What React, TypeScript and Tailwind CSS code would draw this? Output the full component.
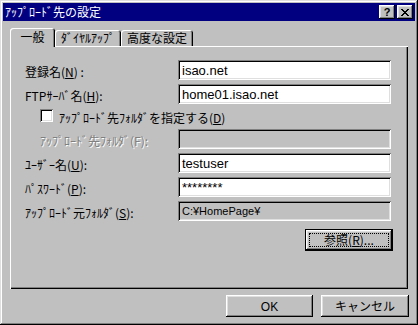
const jp = "font-['Noto_Sans_CJK_JP',sans-serif]";
const raised =
  "shadow-[inset_-1px_-1px_#000,inset_1px_1px_#fff,inset_-2px_-2px_#808080,inset_2px_2px_#dfdfdf]";
const sunken =
  "shadow-[inset_1px_1px_#808080,inset_-1px_-1px_#fff,inset_2px_2px_#000,inset_-2px_-2px_#dfdfdf]";

function Label({ children, disabled }: { children: React.ReactNode; disabled?: boolean }) {
  return (
    <span
      className={`text-[12px] leading-none whitespace-nowrap ${jp} ${
        disabled ? "text-[#808080] [text-shadow:1px_1px_0_#fff]" : "text-black"
      }`}
    >
      {children}
    </span>
  );
}

function Field({
  label,
  value,
  gray,
  small,
  indent,
  disabled,
}: {
  label: React.ReactNode;
  value?: string;
  gray?: boolean;
  small?: boolean;
  indent?: boolean;
  disabled?: boolean;
}) {
  return (
    <div className="flex h-[20px] items-center">
      <div className={indent ? "ml-[15px] w-[138px]" : "w-[153px]"}>
        <Label disabled={disabled}>{label}</Label>
      </div>
      <div
        className={`flex h-[20px] w-[213px] items-center pl-[4px] ${sunken} ${
          gray ? "bg-[#c0c0c0]" : "bg-white"
        }`}
      >
        <span
          className={`font-['Liberation_Sans',sans-serif] leading-none text-black ${
            small ? "text-[11px]" : "text-[13px]"
          }`}
        >
          {value}
        </span>
      </div>
    </div>
  );
}

function Tab({ label, selected, w }: { label: string; selected?: boolean; w: string }) {
  return (
    <div
      className={`flex items-center justify-center rounded-t-[3px] bg-[#c0c0c0] shadow-[inset_1px_1px_#fff,inset_-1px_0_#000,inset_-2px_0_#808080] ${w} ${
        selected ? "relative z-10 -mb-px h-[19px] pb-[1px]" : "h-[16px]"
      }`}
    >
      <span className={`text-[12px] leading-none text-black ${jp}`}>{label}</span>
    </div>
  );
}

function Button({ children, def }: { children: React.ReactNode; def?: boolean }) {
  if (def) {
    return (
      <div className="h-[22px] w-[88px] border border-black bg-[#c0c0c0]">
        <div className={`flex h-full w-full items-center justify-center p-[3px] ${raised}`}>
          <div className="flex h-full w-full items-center justify-center border border-dotted border-black">
            <span className={`text-[12px] leading-none ${jp}`}>{children}</span>
          </div>
        </div>
      </div>
    );
  }
  return (
    <div className={`flex h-[22px] items-center justify-center bg-[#c0c0c0] ${raised}`}>
      <span className={`text-[12px] leading-none ${jp}`}>{children}</span>
    </div>
  );
}

export default function App() {
  return (
    <div
      className={`flex h-[325px] w-[418px] flex-col bg-[#c0c0c0] p-[3px] shadow-[inset_-1px_-1px_#000,inset_1px_1px_#dfdfdf,inset_-2px_-2px_#808080,inset_2px_2px_#fff] ${jp}`}
    >
      {/* title bar */}
      <div className="flex h-[18px] items-center bg-[#000080] pl-[2px] pr-[2px]">
        <span className="text-[12px] leading-none text-white">ｱｯﾌﾟﾛｰﾄﾞ先の設定</span>
        <div className="ml-auto flex gap-[2px]">
          <div className={`flex h-[14px] w-[16px] items-center justify-center bg-[#c0c0c0] ${raised}`}>
            <span className="font-['Liberation_Sans',sans-serif] text-[11px] font-bold leading-none text-black">?</span>
          </div>
          <div className={`flex h-[14px] w-[16px] items-center justify-center bg-[#c0c0c0] ${raised}`}>
            <svg width="8" height="7" viewBox="0 0 8 7" shapeRendering="crispEdges">
              <path
                d="M0 0h2v1H0zM6 0h2v1H6zM1 1h2v1H1zM5 1h2v1H5zM2 2h4v1H2zM3 3h2v1H3zM2 4h4v1H2zM1 5h2v1H1zM5 5h2v1H5zM0 6h2v1H0zM6 6h2v1H6z"
                fill="#000"
              />
            </svg>
          </div>
        </div>
      </div>

      {/* tabs */}
      <div className="mt-[7px] flex h-[18px] items-end pl-[7px]">
        <Tab label="一般" selected w="w-[45px]" />
        <Tab label="ﾀﾞｲﾔﾙｱｯﾌﾟ" w="w-[66px]" />
        <Tab label="高度な設定" w="w-[72px]" />
      </div>

      {/* panel */}
      <div className="ml-[7px] flex h-[243px] w-[398px] flex-col pl-[15px] pt-[14px] shadow-[inset_1px_1px_#fff,inset_-1px_-1px_#000,inset_-2px_-2px_#808080]">
        <Field
          label={
            <>
              登録名(<u>N</u>) :
            </>
          }
          value="isao.net"
        />
        <div className="mt-[4px]">
          <Field
            label={
              <>
                FTPｻｰﾊﾞ名(<u>H</u>):
              </>
            }
            value="home01.isao.net"
          />
        </div>
        <div className="ml-[15px] mt-[5px] flex h-[13px] items-center">
          <div className={`h-[13px] w-[13px] bg-white ${sunken}`} />
          <span className="ml-[6px]">
            <Label>
              ｱｯﾌﾟﾛｰﾄﾞ先ﾌｫﾙﾀﾞを指定する(<u>D</u>)
            </Label>
          </span>
        </div>
        <div className="mt-[7px]">
          <Field indent disabled gray label={<>ｱｯﾌﾟﾛｰﾄﾞ先ﾌｫﾙﾀﾞ(F):</>} />
        </div>
        <div className="mt-[4px]">
          <Field
            label={
              <>
                ﾕｰｻﾞｰ名(<u>U</u>):
              </>
            }
            value="testuser"
          />
        </div>
        <div className="mt-[4px]">
          <Field
            label={
              <>
                ﾊﾟｽﾜｰﾄﾞ(<u>P</u>):
              </>
            }
            value="********"
          />
        </div>
        <div className="mt-[4px]">
          <Field
            gray
            small
            label={
              <>
                ｱｯﾌﾟﾛｰﾄﾞ元ﾌｫﾙﾀﾞ(<u>S</u>):
              </>
            }
            value="C:¥HomePage¥"
          />
        </div>
        <div className="ml-[280px] mt-[8px]">
          <Button def>
            参照(<u>R</u>)...
          </Button>
        </div>
      </div>

      {/* bottom buttons */}
      <div className="mt-[6px] flex justify-end gap-[8px] pr-[6px]">
        <div className="w-[87px]">
          <Button>
            <span className="font-['Liberation_Sans',sans-serif]">OK</span>
          </Button>
        </div>
        <div className="w-[88px]">
          <Button>キャンセル</Button>
        </div>
      </div>
    </div>
  );
}
